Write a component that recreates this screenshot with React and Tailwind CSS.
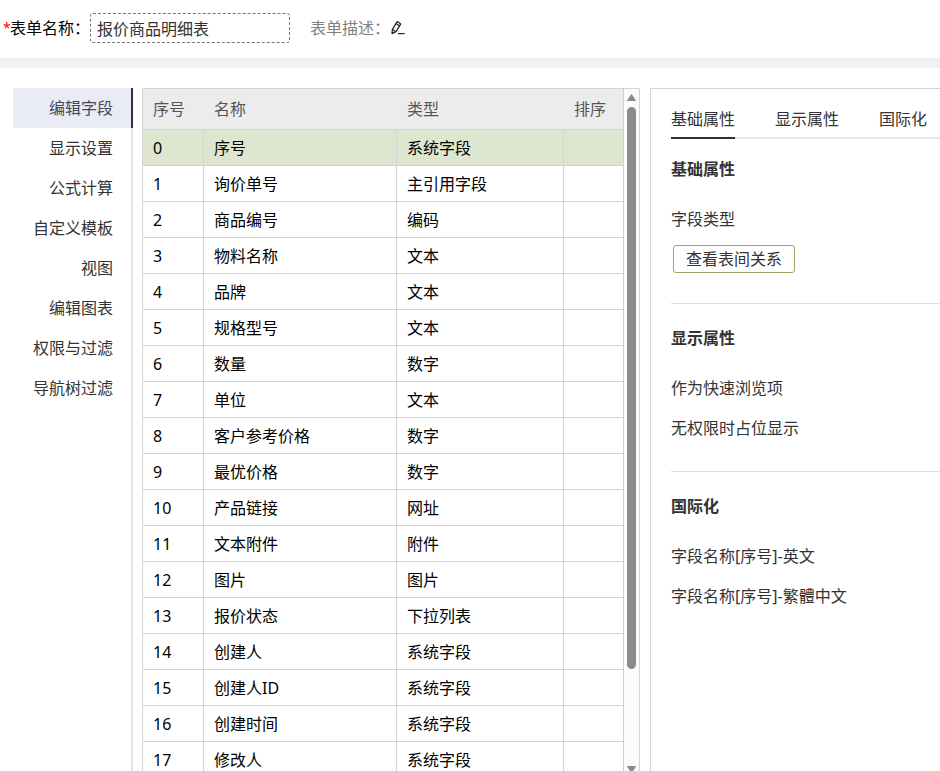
const menus = ["编辑字段", "显示设置", "公式计算", "自定义模板", "视图", "编辑图表", "权限与过滤", "导航树过滤"];

const fields = [
  { name: "序号", type: "系统字段" },
  { name: "询价单号", type: "主引用字段" },
  { name: "商品编号", type: "编码" },
  { name: "物料名称", type: "文本" },
  { name: "品牌", type: "文本" },
  { name: "规格型号", type: "文本" },
  { name: "数量", type: "数字" },
  { name: "单位", type: "文本" },
  { name: "客户参考价格", type: "数字" },
  { name: "最优价格", type: "数字" },
  { name: "产品链接", type: "网址" },
  { name: "文本附件", type: "附件" },
  { name: "图片", type: "图片" },
  { name: "报价状态", type: "下拉列表" },
  { name: "创建人", type: "系统字段" },
  { name: "创建人ID", type: "系统字段" },
  { name: "创建时间", type: "系统字段" },
  { name: "修改人", type: "系统字段" },
];

const tabs = ["基础属性", "显示属性", "国际化"];

function EditIcon() {
  return (
    <svg width="16" height="16" viewBox="0 0 16 16" fill="none" stroke="#222" strokeWidth="1.2" strokeLinejoin="round">
      <path d="M2 13.6 L2.4 9.4 L7.2 1.6 L10.8 3.9 L6 11.6 Z" />
      <path d="M6 3.6 L9.6 5.9 M2.4 9.6 L5.6 11.6" />
      <path d="M8 13.6 H14.6" />
    </svg>
  );
}

function Header() {
  return (
    <header className="flex h-[68px] shrink-0 items-center border-b-10 border-[#f0f1f6] pb-0.5 pl-[3px]">
      <label htmlFor="formName" className="flex items-center text-black">
        <span className="w-[7px] text-[14px] text-[#f00]">*</span>
        表单名称：
      </label>
      <input
        id="formName"
        type="text"
        defaultValue="报价商品明细表"
        className="h-[30px] w-[200px] rounded-[3px] border border-dashed border-[#777] px-1.5 text-[#333] outline-none"
      />
      <span className="ml-5 text-[#808080]">表单描述：</span>
      <button type="button" aria-label="编辑描述" className="cursor-pointer">
        <EditIcon />
      </button>
    </header>
  );
}

function SideMenu() {
  return (
    <nav className="ml-[13px] flex w-[120px] shrink-0 flex-col">
      {menus.map((m, i) => (
        <a
          key={m}
          href="#"
          className={
            i === 0
              ? "flex h-10 items-center justify-end border-r-2 border-[#2d3142] bg-[#e9ecf6] pr-[18px] text-[#444857]"
              : "flex h-10 items-center justify-end border-r-2 border-[#e3e4e8] pr-[18px]"
          }
        >
          {m}
        </a>
      ))}
      <div className="flex-1 border-r-2 border-[#e3e4e8]" />
    </nav>
  );
}

function ScrollRail() {
  return (
    <div className="flex w-4 shrink-0 flex-col items-center border-l border-[#d0d0d0] bg-[#fcfcfc] pt-[5px]">
      <svg width="9" height="7" viewBox="0 0 9 7" className="shrink-0">
        <path d="M4.5 0.5 L8.5 6.5 H0.5 Z" fill="#8a8a8a" stroke="#8a8a8a" strokeLinejoin="round" />
      </svg>
      <div className="my-1.5 w-[9px] flex-1">
        <div className="h-[86%] rounded-full bg-[#8b8b8b]" />
      </div>
      <svg width="9" height="5" viewBox="0 0 9 5" className="shrink-0">
        <path d="M0.5 0.5 H8.5 L5.5 5 H3.5 Z" fill="#8a8a8a" stroke="#8a8a8a" strokeLinejoin="round" />
      </svg>
    </div>
  );
}

function FieldTable() {
  return (
    <section className="ml-[9px] flex w-[498px] shrink-0 overflow-hidden border border-b-0 border-[#d4d4d4]">
      <div className="min-w-0 flex-1 overflow-hidden">
        <table className="w-full table-fixed border-separate border-spacing-0 text-left">
          <colgroup>
            <col className="w-[61px]" />
            <col className="w-[193px]" />
            <col className="w-[167px]" />
            <col />
          </colgroup>
          <thead>
            <tr className="h-[41px] bg-[#ececec] text-[#555]">
              {["序号", "名称", "类型", "排序"].map((h) => (
                <th key={h} className="border-b border-[#d3dac8] py-0 pr-0 pl-2.5 font-normal">
                  {h}
                </th>
              ))}
            </tr>
          </thead>
          <tbody>
            {fields.map((f, i) => (
              <tr key={i} className={i === 0 ? "h-9 bg-[#dde6cf] text-black" : "h-9 bg-white text-black"}>
                <td className="border-r border-b border-[#d4d4d4] py-0 pr-0 pl-2.5">{i}</td>
                <td className="border-r border-b border-[#d4d4d4] py-0 pr-0 pl-2.5">{f.name}</td>
                <td className="border-r border-b border-[#d4d4d4] py-0 pr-0 pl-2.5">{f.type}</td>
                <td className="border-b border-[#d4d4d4] p-0" />
              </tr>
            ))}
          </tbody>
        </table>
      </div>
      <ScrollRail />
    </section>
  );
}

function Section({ title, children, last }) {
  return (
    <section className={last ? "pt-3.5" : "border-b border-[#dcdcdc] pt-3.5 pb-[23px]"}>
      <h3 className="mb-2.5 flex h-10 items-center font-bold">{title}</h3>
      {children}
    </section>
  );
}

function Row({ children }) {
  return <p className="flex h-10 items-center">{children}</p>;
}

function PropertyPanel() {
  return (
    <aside className="ml-2.5 min-w-0 flex-1 overflow-hidden border-t border-l border-[#d4d4d4] pt-2.5 pl-5">
      <div role="tablist" className="flex gap-10 shadow-[inset_0_-2px_0_#e6e6e6]">
        {tabs.map((t, i) => (
          <button
            key={t}
            type="button"
            role="tab"
            aria-selected={i === 0}
            className={
              i === 0
                ? "h-10 shrink-0 cursor-pointer border-b-2 border-[#2d3142] pt-0.5"
                : "h-10 shrink-0 cursor-pointer border-b-2 border-transparent pt-0.5"
            }
          >
            {t}
          </button>
        ))}
      </div>
      <div className="-mt-1">
        <Section title="基础属性">
          <Row>字段类型</Row>
          <button
            type="button"
            className="mt-1.5 mb-[7px] ml-0.5 flex h-7 cursor-pointer items-center rounded-[3px] border border-[#93ab64] px-3"
          >
            查看表间关系
          </button>
        </Section>
        <Section title="显示属性">
          <Row>作为快速浏览项</Row>
          <Row>无权限时占位显示</Row>
        </Section>
        <Section title="国际化" last>
          <Row>字段名称[序号]-英文</Row>
          <Row>字段名称[序号]-繁體中文</Row>
        </Section>
      </div>
    </aside>
  );
}

export default function App() {
  return (
    <div className="flex h-screen flex-col overflow-hidden bg-white font-['Noto_Sans','Noto_Sans_CJK_SC',sans-serif] text-[16px] leading-6 text-[#333]">
      <Header />
      <main className="flex min-h-0 flex-1 pt-5">
        <SideMenu />
        <FieldTable />
        <PropertyPanel />
      </main>
    </div>
  );
}
